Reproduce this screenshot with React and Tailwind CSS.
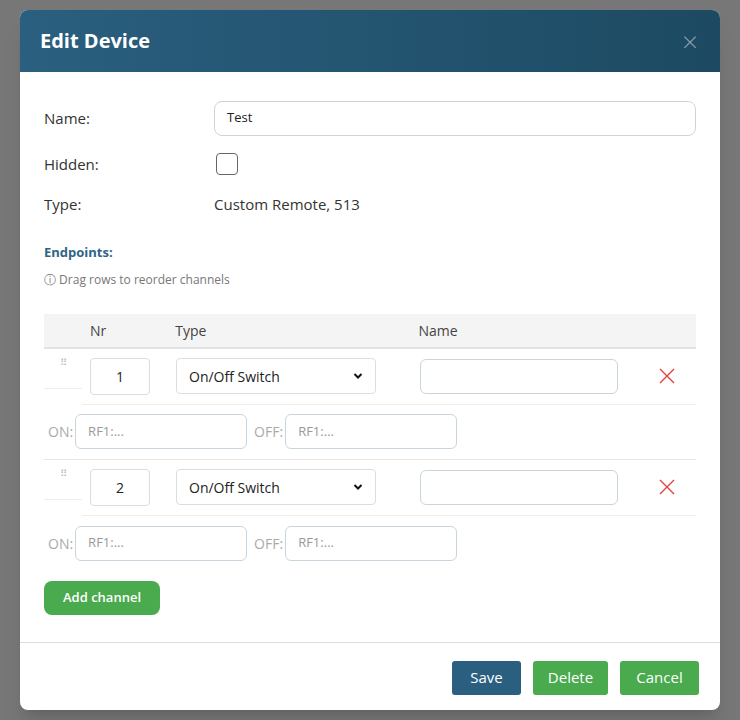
export default function App() {
  const ff = { fontFamily: '"Open Sans", "Noto Sans", sans-serif' };
  const Row = ({ n, last }) => (
    <>
      <div className="flex h-[56px] items-center">
        <div className="w-[38px] self-stretch flex flex-col">
          <div className="h-[40px] border-b border-[#eee] flex justify-center pt-[8px] text-[#bbb] text-[10px] leading-none">⠿</div>
        </div>
        <div className="flex-1 self-stretch flex items-center border-b border-[#eee]">
          <input readOnly value={n} className="ml-[8px] w-[60px] h-[37px] border border-[#ddd] rounded-[4px] text-center text-[14px] text-[#222] outline-none" />
          <div className="ml-[26px] w-[200px] h-[36px] border border-[#ddd] rounded-[4px] flex items-center justify-between px-[12px] text-[14px] text-[#222]">
            <span>On/Off Switch</span>
            <svg width="10" height="8" viewBox="0 0 10 8"><path d="M1.5 2 L5 5.5 L8.5 2" stroke="#111" strokeWidth="2" fill="none" /></svg>
          </div>
          <div className="ml-[44px] w-[198px] h-[35px] border border-[#c9d5dc] rounded-[6px]" />
          <svg className="ml-[41px]" width="16" height="16" viewBox="0 0 16 16"><path d="M1 1 L15 15 M15 1 L1 15" stroke="#e04040" strokeWidth="1.4" /></svg>
        </div>
      </div>
      <div className={"flex items-center h-[55px] text-[14px] text-[#aaa] " + (last ? "" : "border-b border-[#e6e6e6]")}>
        <span className="ml-[4px] mr-[2px]">ON:</span>
        <div className="w-[172px] h-[35px] border border-[#c9d5dc] rounded-[6px] flex items-center px-[12px] text-[13px] text-[#999]">RF1:...</div>
        <span className="ml-[7px] mr-[2px]">OFF:</span>
        <div className="w-[172px] h-[35px] border border-[#c9d5dc] rounded-[6px] flex items-center px-[12px] text-[13px] text-[#999]">RF1:...</div>
      </div>
    </>
  );
  return (
    <div style={ff} className="w-[740px] h-[720px] bg-[#777] pt-[10px] pl-[20px] overflow-hidden">
      <div className="w-[700px] h-[700px] bg-white rounded-[8px] overflow-hidden flex flex-col shadow-xl">
        <div className="h-[62px] bg-gradient-to-r from-[#2a5f7f] to-[#1d4a62] flex items-center justify-between px-[20px] shrink-0">
          <span className="text-white text-[20px] font-bold">Edit Device</span>
          <span className="text-[#8a9fab] text-[28px] font-light leading-none mr-[2px]">×</span>
        </div>
        <div className="flex-1 px-[24px] pt-[29px] text-[15px] text-[#333]">
          <div className="flex items-center h-[34px]">
            <span className="w-[170px]">Name:</span>
            <div className="flex-1 h-[35px] border border-[#c9d5dc] rounded-[8px] flex items-center px-[12px] text-[13px] text-[#222]">Test</div>
          </div>
          <div className="flex items-center mt-[12px] h-[34px]">
            <span className="w-[172px]">Hidden:</span>
            <div className="w-[22px] h-[22px] border-[1.5px] border-[#666] rounded-[4px]" />
          </div>
          <div className="flex items-center mt-[6px] h-[34px]">
            <span className="w-[170px]">Type:</span>
            <span>Custom Remote, 513</span>
          </div>
          <div className="mt-[22px] text-[13px] font-bold text-[#2e6585]">Endpoints:</div>
          <div className="mt-[8px] text-[12px] text-[#777]">ⓘ Drag rows to reorder channels</div>
          <div className="mt-[25px]">
            <div className="h-[35px] bg-[#f4f4f4] border-b-2 border-[#e3e3e3] flex items-center text-[14px] text-[#444] font-medium">
              <span className="ml-[46px]">Nr</span>
              <span className="ml-[69px]">Type</span>
              <span className="ml-[212px]">Name</span>
            </div>
            <Row n="1" />
            <Row n="2" last />
          </div>
          <button className="mt-[10px] w-[116px] h-[34px] bg-[#4aaa4e] rounded-[8px] text-white text-[13px] font-semibold">Add channel</button>
        </div>
        <div className="h-[68px] border-t border-[#ddd] flex items-center justify-end gap-[12px] pr-[21px] pt-[2px] text-[15px] text-white shrink-0">
          <button className="w-[69px] h-[34px] bg-[#2a5f7f] rounded-[3px]">Save</button>
          <button className="w-[75px] h-[34px] bg-[#4aaa4e] rounded-[3px]">Delete</button>
          <button className="w-[79px] h-[34px] bg-[#4aaa4e] rounded-[3px]">Cancel</button>
        </div>
      </div>
    </div>
  );
}
